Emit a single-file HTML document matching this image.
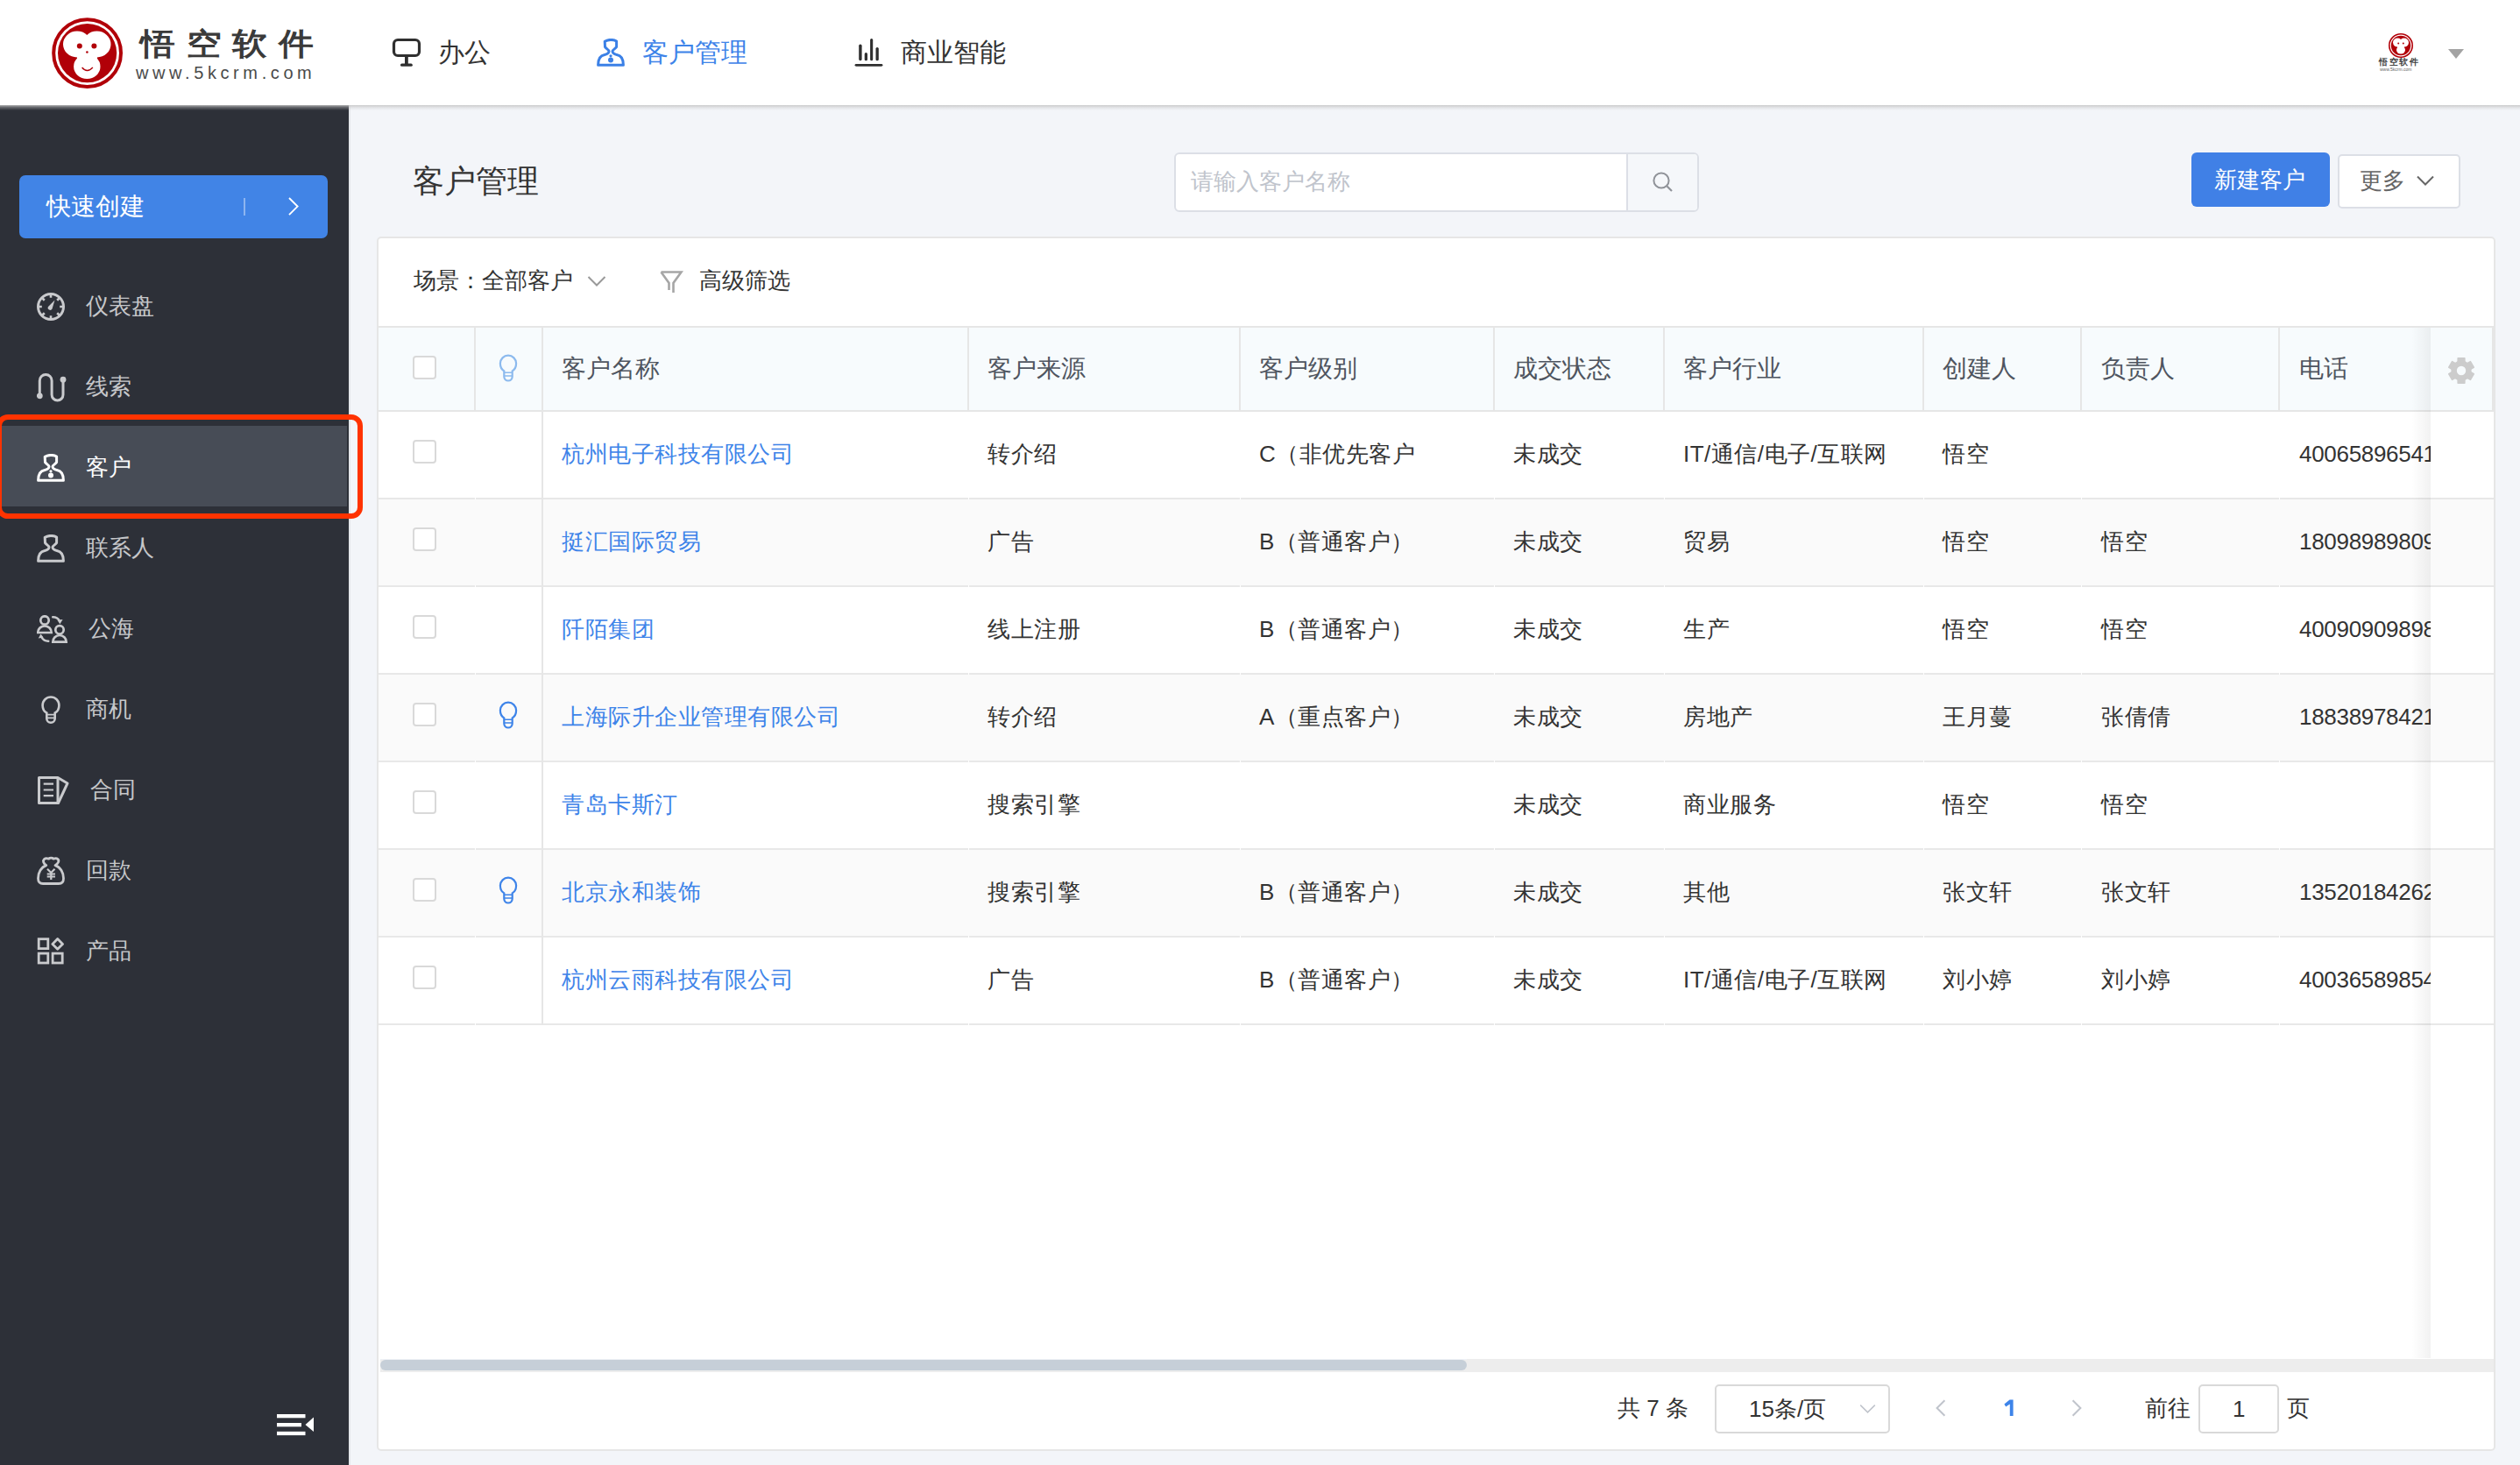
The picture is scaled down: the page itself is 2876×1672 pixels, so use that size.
<!DOCTYPE html>
<html><head><meta charset="utf-8">
<style>
*{margin:0;padding:0;box-sizing:border-box}
html,body{width:2876px;height:1672px;overflow:hidden;background:#F3F5F9;font-family:"Liberation Sans",sans-serif;color:#333;-webkit-font-smoothing:antialiased}
.abs{position:absolute}
.t{position:absolute;white-space:nowrap;line-height:1}
#hdr{position:absolute;left:0;top:0;width:2876px;height:120px;background:#fff;z-index:5}
#hshadow{position:absolute;left:0;top:120px;width:2876px;height:6px;background:linear-gradient(to bottom,rgba(195,195,195,0.85),rgba(195,195,195,0.35) 45%,rgba(195,195,195,0));z-index:6}
#side{position:absolute;left:0;top:120px;width:398px;height:1552px;background:#2D3038;z-index:3}
#mainborder{position:absolute;left:398px;top:120px;width:2px;height:1552px;background:#E4E6EA;z-index:3}
.nav{font-size:30px;color:#333}
.sitem{position:absolute;left:0;width:396px;height:92px}
.sitem .lbl{position:absolute;left:98px;top:1px;line-height:92px;font-size:26px;color:#C6C7CA}
.sitem svg{position:absolute;left:42px;top:30px}
#card{position:absolute;left:430px;top:270px;width:2418px;height:1386px;background:#fff;border:2px solid #E6E6E6;border-radius:5px;overflow:hidden}
.row{position:absolute;left:2px;width:2413px;height:100px;border-bottom:2px solid #EBEEF2}
.hcell{position:absolute;top:0;height:96px;line-height:96px;font-size:28px;color:#4F5560}
.cell{position:absolute;top:0;height:98px;line-height:98px;font-size:26px;color:#333;white-space:nowrap;overflow:hidden}
.vline{position:absolute;width:2px;background:#E8EAEE}
.cb{position:absolute;left:40px;width:27px;height:27px;border:2px solid #D9D9D9;border-radius:4px;background:#fff}
.hd{font-size:28px;color:#4F5560}
.dt{font-size:26px;color:#333;letter-spacing:0.5px}
.dt.link{color:#3E84E9}
.dt.ph{letter-spacing:-0.3px}
</style></head>
<body>
<!-- HEADER -->
<div id="hdr">
  <svg class="abs" style="left:58px;top:19px" width="84" height="84" viewBox="0 0 84 84">
    <circle cx="41.6" cy="41.6" r="38.4" fill="none" stroke="#B10008" stroke-width="4"/>
    <circle cx="41.6" cy="41.6" r="33.6" fill="#B10008"/>
    <ellipse cx="30" cy="31.5" rx="16" ry="15" fill="#fff"/>
    <ellipse cx="52.5" cy="31.5" rx="16" ry="15" fill="#fff"/>
    <ellipse cx="41.3" cy="57" rx="15.2" ry="14" fill="#fff"/>
    <rect x="30" y="38" width="23" height="16" fill="#fff"/>
    <circle cx="32.8" cy="33.5" r="3" fill="#B10008"/>
    <circle cx="49.4" cy="33.5" r="3" fill="#B10008"/>
    <circle cx="41.4" cy="40.5" r="1.3" fill="#B10008"/>
    <path d="M35.6 58 Q41.4 65 47.9 58" fill="none" stroke="#B10008" stroke-width="1.3"/>
  </svg>
  <div class="t" style="left:160px;top:32px;font-size:40px;font-weight:bold;color:#3A3A3A;letter-spacing:12.5px;transform:scaleY(0.88);transform-origin:0 0">悟空软件</div>
  <div class="t" style="left:155px;top:73px;font-size:20px;color:#4A4A4A;letter-spacing:4.6px">www.5kcrm.com</div>

  <!-- nav -->
  <svg class="abs" style="left:446px;top:42px" width="36" height="36" viewBox="0 0 36 36">
    <rect x="3.5" y="3.5" width="29" height="18" rx="4.5" fill="none" stroke="#2F2F2F" stroke-width="3.2"/>
    <rect x="16" y="22" width="3.8" height="9" fill="#2F2F2F"/>
    <rect x="11" y="30.6" width="13.8" height="3.2" rx="1.6" fill="#2F2F2F"/>
  </svg>
  <div class="t nav" style="left:500px;top:45px">办公</div>

  <svg class="abs" style="left:681px;top:44px" width="32" height="32" viewBox="0 0 32 32">
    <path d="M1.6 30.3 C1.6 24 4 19.5 9 18.6 C12 17.8 14 16.8 14 14.6 C14 12.6 10.5 11.6 9.5 9.5 L9.2 3.2 C12 1.6 14 1.4 16 1.4 C18 1.4 20.5 1.8 22.6 3 L22.6 9.5 C21.5 11.6 18 12.6 18 14.6 C18 16.8 20 17.8 23 18.6 C28 19.5 30.4 24 30.4 30.3 Z" fill="none" stroke="#3B80E6" stroke-width="3" stroke-linejoin="round"/>
    <circle cx="16" cy="19.8" r="1.6" fill="#3B80E6"/>
    <circle cx="16" cy="24.6" r="3" fill="#3B80E6"/>
  </svg>
  <div class="t nav" style="left:733px;top:45px;color:#3E84E9">客户管理</div>

  <svg class="abs" style="left:974px;top:42px" width="36" height="36" viewBox="0 0 36 36">
    <rect x="6.2" y="8.6" width="3.4" height="18.7" rx="1.7" fill="#2F2F2F"/>
    <rect x="12.7" y="18.1" width="3.3" height="9.2" rx="1.65" fill="#2F2F2F"/>
    <rect x="19.1" y="2" width="3.1" height="25.3" rx="1.55" fill="#2F2F2F"/>
    <rect x="25.5" y="11.9" width="3.3" height="15.4" rx="1.65" fill="#2F2F2F"/>
    <rect x="1.6" y="30.9" width="31.8" height="2.9" rx="1.45" fill="#2F2F2F"/>
  </svg>
  <div class="t nav" style="left:1028px;top:45px">商业智能</div>

  <!-- avatar -->
  <svg class="abs" style="left:2712px;top:36px" width="56" height="48" viewBox="0 0 56 48">
    <circle cx="28" cy="16" r="13.2" fill="none" stroke="#B10008" stroke-width="1.6"/>
    <circle cx="28" cy="16" r="11.2" fill="#B10008"/>
    <ellipse cx="24.3" cy="12.6" rx="5.3" ry="5" fill="#fff"/>
    <ellipse cx="31.7" cy="12.6" rx="5.3" ry="5" fill="#fff"/>
    <ellipse cx="28" cy="21" rx="5" ry="4.6" fill="#fff"/>
    <rect x="24" y="15" width="8" height="5" fill="#fff"/>
    <circle cx="25.2" cy="13.4" r="1" fill="#B10008"/>
    <circle cx="30.8" cy="13.4" r="1" fill="#B10008"/>
    <rect x="3" y="31" width="50" height="9" fill="none"/>
  </svg>
  <div class="t" style="left:2715px;top:66px;font-size:10px;font-weight:bold;color:#444;letter-spacing:1.6px">悟空软件</div>
  <div class="t" style="left:2716px;top:77px;font-size:5px;color:#666">www.5kcrm.com</div>
  <svg class="abs" style="left:2794px;top:56px" width="18" height="11" viewBox="0 0 18 11"><path d="M0 0 L18 0 L9 11 Z" fill="#A3A3A3"/></svg>
</div>

<!-- SIDEBAR -->
<div id="side">
  <div class="abs" style="left:22px;top:80px;width:352px;height:72px;background:#4184E6;border-radius:7px"></div>
  <div class="t" style="left:53px;top:102px;font-size:28px;color:#fff">快速创建</div>
  <div class="abs" style="left:278px;top:106px;width:2px;height:20px;background:#8DB5F0"></div>
  <svg class="abs" style="left:326px;top:104px" width="18" height="24" viewBox="0 0 18 24"><path d="M4 2 L13.6 11.6 L4 21.2" fill="none" stroke="#fff" stroke-width="1.9"/></svg>

  <div class="sitem" style="top:182px"><svg style="left:42px;top:32px" width="32" height="32" viewBox="0 0 32 32"><circle cx="16" cy="16" r="14.5" fill="none" stroke="#C9CACD" stroke-width="3"/><path d="M16.00 5.80 L16.00 2.60 M23.21 8.79 L25.48 6.52 M26.20 16.00 L29.40 16.00 M23.21 23.21 L25.48 25.48 M16.00 26.20 L16.00 29.40 M8.79 23.21 L6.52 25.48 M5.80 16.00 L2.60 16.00 M8.79 8.79 L6.52 6.52" stroke="#C9CACD" stroke-width="2.6"/><path d="M13.06 15.88 L20.5 8.4 L17.54 18.52 A2.6 2.6 0 0 1 13.06 15.88 Z" fill="#C9CACD"/></svg><div class="lbl">仪表盘</div></div>
  <div class="sitem" style="top:274px"><svg style="left:42px;top:31.5px" width="34" height="34" viewBox="0 0 34 34"><path d="M3.3 25.8 V8.4 A6.9 6.9 0 0 1 17.1 8.4 V24.55 A6.45 6.45 0 0 0 30 24.55 V7.2" fill="none" stroke="#C9CACD" stroke-width="3"/><circle cx="3.3" cy="25.8" r="3.4" fill="#C9CACD"/><circle cx="30" cy="7.2" r="3.4" fill="#C9CACD"/></svg><div class="lbl">线索</div></div>
  <div class="sitem" style="top:366px;background:#474C56;left:2px;width:394px"><svg style="left:40px;top:32px" width="32" height="32" viewBox="0 0 32 32"><path d="M1.6 30.3 C1.6 24 4 19.5 9 18.6 C12 17.8 14 16.8 14 14.6 C14 12.6 10.5 11.6 9.5 9.5 L9.2 3.2 C12 1.6 14 1.4 16 1.4 C18 1.4 20.5 1.8 22.6 3 L22.6 9.5 C21.5 11.6 18 12.6 18 14.6 C18 16.8 20 17.8 23 18.6 C28 19.5 30.4 24 30.4 30.3 Z" fill="none" stroke="#fff" stroke-width="3" stroke-linejoin="round"/><circle cx="16" cy="19.8" r="1.6" fill="#fff"/><circle cx="16" cy="24.6" r="3" fill="#fff"/></svg><div class="lbl" style="color:#fff;left:96px">客户</div></div>
  <div class="sitem" style="top:458px"><svg style="left:42px;top:32px" width="32" height="32" viewBox="0 0 32 32"><path d="M1.6 30.3 C1.6 24 4 19.5 9 18.6 C12 17.8 14 16.8 14 14.6 C14 12.6 10.5 11.6 9.5 9.5 L9.2 3.2 C12 1.6 14 1.4 16 1.4 C18 1.4 20.5 1.8 22.6 3 L22.6 9.5 C21.5 11.6 18 12.6 18 14.6 C18 16.8 20 17.8 23 18.6 C28 19.5 30.4 24 30.4 30.3 Z" fill="none" stroke="#C9CACD" stroke-width="3" stroke-linejoin="round"/></svg><div class="lbl">联系人</div></div>
  <div class="sitem" style="top:550px"><svg style="left:42px;top:32px" width="36" height="33" viewBox="0 0 36 33"><g fill="none" stroke="#C9CACD" stroke-width="2.7"><circle cx="9" cy="6" r="4.7"/><path d="M1.3 20 A7.7 7.7 0 0 1 16.7 20 Z"/><circle cx="26" cy="16.8" r="4.7"/><path d="M18.3 30.7 A7.7 7.7 0 0 1 33.7 30.7 Z"/></g>
<g fill="none" stroke="#C9CACD" stroke-width="2.4" stroke-linecap="round"><path d="M18.2 2.3 Q23.5 2.2 26 6.5"/><path d="M13.3 29.8 Q8.2 30 5.3 25.2"/></g>
<path d="M23.2 5.6 L29.6 5 L26.4 10.2 Z M1.8 26.6 L7.6 25.6 L4.5 21.6 Z" fill="#C9CACD"/></svg><div class="lbl" style="left:101px">公海</div></div>
  <div class="sitem" style="top:642px"><svg style="left:46px;top:31.6px" width="24" height="34" viewBox="0 0 24 34"><path d="M7.3 19.6 C4.5 18 2.6 14.6 2.6 10.9 C2.6 5.7 6.8 1.5 12 1.5 C17.2 1.5 21.4 5.7 21.4 10.9 C21.4 14.6 19.5 18 16.7 19.6 L16.7 26 C16.7 28.7 14.6 30.8 12 30.8 C9.4 30.8 7.3 28.7 7.3 26 Z" fill="none" stroke="#C9CACD" stroke-width="2.6"/><path d="M7.3 21.6 H16.7 M7.3 25.3 H16.7" stroke="#C9CACD" stroke-width="1.8"/></svg><div class="lbl">商机</div></div>
  <div class="sitem" style="top:734px"><svg style="left:41px;top:31px" width="38" height="34" viewBox="0 0 38 34"><path d="M3.5 2.5 H25 L36 9 L25.5 31.5 H3.5 Z" fill="none" stroke="#C9CACD" stroke-width="3" stroke-linejoin="round"/><path d="M25 2.5 V31.5" stroke="#C9CACD" stroke-width="3"/><path d="M8.7 9.6 H20 M8.7 16.5 H20 M8.7 23.2 H20" stroke="#C9CACD" stroke-width="2.2"/></svg><div class="lbl" style="left:103px">合同</div></div>
  <div class="sitem" style="top:826px"><svg style="left:41px;top:31px" width="34" height="34" viewBox="0 0 34 34"><path d="M11.8 10.6 C8.5 8.5 7.5 5.5 9.5 3.6 C11 2.3 13 2.6 14.6 3.2 C16 1.8 18.6 1.8 20 3.2 C21.6 2.6 23.6 2.3 25 3.6 C27 5.5 25.5 8.5 22 10.6 C28 12.5 31.5 19 31.5 25.5 C31.5 29.5 29.5 31.5 26 31.5 H8 C4.5 31.5 2.5 29.5 2.5 25.5 C2.5 19 6 12.5 11.8 10.6 Z" fill="none" stroke="#C9CACD" stroke-width="2.8" stroke-linejoin="round"/><path d="M13 14.8 L17.3 19 L21.5 14.8 M17.3 19 V27 M12.7 20.5 H22 M12.7 23.5 H22" fill="none" stroke="#C9CACD" stroke-width="2.2"/></svg><div class="lbl">回款</div></div>
  <div class="sitem" style="top:918px"><svg style="left:41px;top:32px" width="34" height="34" viewBox="0 0 34 34"><g fill="none" stroke="#C9CACD" stroke-width="2.8"><rect x="3.2" y="1.7" width="10.6" height="10.9"/><rect x="3.2" y="18.1" width="10.6" height="10.9"/><rect x="19.1" y="18.1" width="11.1" height="10.9"/><path d="M24.7 1.6 L30.5 7.4 L24.7 13.2 L18.9 7.4 Z" stroke-linejoin="round"/></g></svg><div class="lbl">产品</div></div>
  <svg class="abs" style="left:314px;top:1492px" width="48" height="28" viewBox="0 0 48 28">
    <rect x="2" y="2" width="32.5" height="4.3" fill="#fff"/>
    <rect x="2" y="12" width="28" height="4.3" fill="#fff"/>
    <rect x="2" y="21.8" width="32.5" height="4.3" fill="#fff"/>
    <path d="M44 5.5 L44 22 L34.5 14 Z" fill="#fff"/>
  </svg>
</div>
<div id="mainborder"></div>
<div id="hshadow"></div>

<!-- red highlight -->
<div class="abs" style="left:-4px;top:473px;width:418px;height:119px;border:6px solid #FF3300;border-radius:13px;z-index:6"></div>

<!-- MAIN -->
<div class="t" style="left:471px;top:189px;font-size:36px;color:#333">客户管理</div>

<div class="abs" style="left:1340px;top:174px;width:599px;height:68px;border:2px solid #DCDFE6;border-radius:6px;background:#fff;overflow:hidden">
  <div class="t" style="left:17px;top:18px;font-size:26px;color:#C0C4CC">请输入客户名称</div>
  <div class="abs" style="left:514px;top:0;width:83px;height:64px;background:#F5F7FA;border-left:2px solid #DCDFE6"></div>
  <svg class="abs" style="left:543px;top:19px" width="26" height="26" viewBox="0 0 26 26"><circle cx="11" cy="11" r="8.6" fill="none" stroke="#909399" stroke-width="2"/><path d="M17.5 17.5 L23 23" stroke="#909399" stroke-width="2.2"/></svg>
</div>

<div class="abs" style="left:2501px;top:174px;width:158px;height:62px;background:#4080E6;border-radius:6px"></div>
<div class="t" style="left:2527px;top:192px;font-size:26px;color:#fff">新建客户</div>
<div class="abs" style="left:2668px;top:176px;width:140px;height:62px;background:#fff;border:2px solid #DCDFE6;border-radius:5px"></div>
<div class="t" style="left:2693px;top:193px;font-size:26px;color:#666">更多</div>
<svg class="abs" style="left:2758px;top:200px" width="20" height="13" viewBox="0 0 20 13"><path d="M1 1.5 L10 10.5 L19 1.5" fill="none" stroke="#666" stroke-width="2"/></svg>

<div id="card"></div>
<!-- filter bar -->
<div class="t" style="left:472px;top:307px;font-size:26px;color:#333">场景：全部客户</div>
<svg class="abs" style="left:670px;top:314px" width="22" height="14" viewBox="0 0 22 14"><path d="M1.5 2 L11 11.5 L20.5 2" fill="none" stroke="#999" stroke-width="2"/></svg>
<svg class="abs" style="left:752px;top:307px" width="28" height="30" viewBox="0 0 28 30"><path d="M2.5 3.5 H25.5 L16.5 16 V27" fill="none" stroke="#A6A6A6" stroke-width="2.6"/><path d="M2.5 3.5 L11.5 16 V24" fill="none" stroke="#A6A6A6" stroke-width="2.6"/></svg>
<div class="t" style="left:798px;top:307px;font-size:26px;color:#333">高级筛选</div>
<div class="abs" style="left:432px;top:372px;width:2414px;height:2px;background:#E6E6E6"></div>
<div class="abs" style="left:432px;top:374px;width:2414px;height:94px;background:#F7FBFD"></div>
<div class="abs" style="left:432px;top:468px;width:2414px;height:2px;background:#E6E6E6"></div>
<div class="abs" style="left:541px;top:374px;width:2px;height:94px;background:#E6E6E6"></div>
<div class="abs" style="left:618px;top:374px;width:2px;height:94px;background:#E6E6E6"></div>
<div class="abs" style="left:1104px;top:374px;width:2px;height:94px;background:#E6E6E6"></div>
<div class="abs" style="left:1414px;top:374px;width:2px;height:94px;background:#E6E6E6"></div>
<div class="abs" style="left:1704px;top:374px;width:2px;height:94px;background:#E6E6E6"></div>
<div class="abs" style="left:1898px;top:374px;width:2px;height:94px;background:#E6E6E6"></div>
<div class="abs" style="left:2194px;top:374px;width:2px;height:94px;background:#E6E6E6"></div>
<div class="abs" style="left:2374px;top:374px;width:2px;height:94px;background:#E6E6E6"></div>
<div class="abs" style="left:2600px;top:374px;width:2px;height:94px;background:#E6E6E6"></div>
<div class="cb" style="left:471px;top:406px"></div>
<svg class="abs" style="left:568px;top:404px" width="24" height="34" viewBox="0 0 24 34"><path d="M7.3 19.4 C4.5 17.8 2.9 14.5 2.9 10.8 C2.9 5.8 7 1.7 12 1.7 C17 1.7 21.1 5.8 21.1 10.8 C21.1 14.5 19.5 17.8 16.7 19.4 L16.7 25.8 C16.7 28.4 14.6 30.5 12 30.5 C9.4 30.5 7.3 28.4 7.3 25.8 Z" fill="none" stroke="#8CBAEE" stroke-width="2.2"/><path d="M7.3 21.3 H16.7 M7.3 25 H16.7" stroke="#8CBAEE" stroke-width="1.5"/></svg>
<div class="t hd" style="left:641px;top:407px">客户名称</div>
<div class="t hd" style="left:1127px;top:407px">客户来源</div>
<div class="t hd" style="left:1437px;top:407px">客户级别</div>
<div class="t hd" style="left:1727px;top:407px">成交状态</div>
<div class="t hd" style="left:1921px;top:407px">客户行业</div>
<div class="t hd" style="left:2217px;top:407px">创建人</div>
<div class="t hd" style="left:2398px;top:407px">负责人</div>
<div class="t hd" style="left:2624px;top:407px">电话</div>
<div class="abs" style="left:432px;top:470px;width:2414px;height:98px;background:#FFFFFF"></div>
<div class="abs" style="left:432px;top:568px;width:2414px;height:2px;background:#E8E8E8"></div>
<div class="abs" style="left:542px;top:568px;width:1px;height:2px;background:#FFFFFF"></div>
<div class="abs" style="left:1105px;top:568px;width:1px;height:2px;background:#FFFFFF"></div>
<div class="abs" style="left:1415px;top:568px;width:1px;height:2px;background:#FFFFFF"></div>
<div class="abs" style="left:1705px;top:568px;width:1px;height:2px;background:#FFFFFF"></div>
<div class="abs" style="left:1899px;top:568px;width:1px;height:2px;background:#FFFFFF"></div>
<div class="abs" style="left:2195px;top:568px;width:1px;height:2px;background:#FFFFFF"></div>
<div class="abs" style="left:2375px;top:568px;width:1px;height:2px;background:#FFFFFF"></div>
<div class="abs" style="left:2601px;top:568px;width:1px;height:2px;background:#FFFFFF"></div>
<div class="cb" style="left:471px;top:502px"></div>
<div class="t dt link" style="left:641px;top:505px">杭州电子科技有限公司</div>
<div class="t dt" style="left:1127px;top:505px">转介绍</div>
<div class="t dt" style="left:1437px;top:505px">C（非优先客户</div>
<div class="t dt" style="left:1727px;top:505px">未成交</div>
<div class="t dt" style="left:1921px;top:505px">IT/通信/电子/互联网</div>
<div class="t dt" style="left:2217px;top:505px">悟空</div>
<div class="t dt" style="left:2398px;top:505px"></div>
<div class="t dt ph" style="left:2624px;top:505px">40065896541</div>
<div class="abs" style="left:432px;top:570px;width:2414px;height:98px;background:#FAFAFA"></div>
<div class="abs" style="left:432px;top:668px;width:2414px;height:2px;background:#E8E8E8"></div>
<div class="abs" style="left:542px;top:668px;width:1px;height:2px;background:#FFFFFF"></div>
<div class="abs" style="left:1105px;top:668px;width:1px;height:2px;background:#FFFFFF"></div>
<div class="abs" style="left:1415px;top:668px;width:1px;height:2px;background:#FFFFFF"></div>
<div class="abs" style="left:1705px;top:668px;width:1px;height:2px;background:#FFFFFF"></div>
<div class="abs" style="left:1899px;top:668px;width:1px;height:2px;background:#FFFFFF"></div>
<div class="abs" style="left:2195px;top:668px;width:1px;height:2px;background:#FFFFFF"></div>
<div class="abs" style="left:2375px;top:668px;width:1px;height:2px;background:#FFFFFF"></div>
<div class="abs" style="left:2601px;top:668px;width:1px;height:2px;background:#FFFFFF"></div>
<div class="cb" style="left:471px;top:602px"></div>
<div class="t dt link" style="left:641px;top:605px">挺汇国际贸易</div>
<div class="t dt" style="left:1127px;top:605px">广告</div>
<div class="t dt" style="left:1437px;top:605px">B（普通客户）</div>
<div class="t dt" style="left:1727px;top:605px">未成交</div>
<div class="t dt" style="left:1921px;top:605px">贸易</div>
<div class="t dt" style="left:2217px;top:605px">悟空</div>
<div class="t dt" style="left:2398px;top:605px">悟空</div>
<div class="t dt ph" style="left:2624px;top:605px">18098989809</div>
<div class="abs" style="left:432px;top:670px;width:2414px;height:98px;background:#FFFFFF"></div>
<div class="abs" style="left:432px;top:768px;width:2414px;height:2px;background:#E8E8E8"></div>
<div class="abs" style="left:542px;top:768px;width:1px;height:2px;background:#FFFFFF"></div>
<div class="abs" style="left:1105px;top:768px;width:1px;height:2px;background:#FFFFFF"></div>
<div class="abs" style="left:1415px;top:768px;width:1px;height:2px;background:#FFFFFF"></div>
<div class="abs" style="left:1705px;top:768px;width:1px;height:2px;background:#FFFFFF"></div>
<div class="abs" style="left:1899px;top:768px;width:1px;height:2px;background:#FFFFFF"></div>
<div class="abs" style="left:2195px;top:768px;width:1px;height:2px;background:#FFFFFF"></div>
<div class="abs" style="left:2375px;top:768px;width:1px;height:2px;background:#FFFFFF"></div>
<div class="abs" style="left:2601px;top:768px;width:1px;height:2px;background:#FFFFFF"></div>
<div class="cb" style="left:471px;top:702px"></div>
<div class="t dt link" style="left:641px;top:705px">阡陌集团</div>
<div class="t dt" style="left:1127px;top:705px">线上注册</div>
<div class="t dt" style="left:1437px;top:705px">B（普通客户）</div>
<div class="t dt" style="left:1727px;top:705px">未成交</div>
<div class="t dt" style="left:1921px;top:705px">生产</div>
<div class="t dt" style="left:2217px;top:705px">悟空</div>
<div class="t dt" style="left:2398px;top:705px">悟空</div>
<div class="t dt ph" style="left:2624px;top:705px">40090909898</div>
<div class="abs" style="left:432px;top:770px;width:2414px;height:98px;background:#FAFAFA"></div>
<div class="abs" style="left:432px;top:868px;width:2414px;height:2px;background:#E8E8E8"></div>
<div class="abs" style="left:542px;top:868px;width:1px;height:2px;background:#FFFFFF"></div>
<div class="abs" style="left:1105px;top:868px;width:1px;height:2px;background:#FFFFFF"></div>
<div class="abs" style="left:1415px;top:868px;width:1px;height:2px;background:#FFFFFF"></div>
<div class="abs" style="left:1705px;top:868px;width:1px;height:2px;background:#FFFFFF"></div>
<div class="abs" style="left:1899px;top:868px;width:1px;height:2px;background:#FFFFFF"></div>
<div class="abs" style="left:2195px;top:868px;width:1px;height:2px;background:#FFFFFF"></div>
<div class="abs" style="left:2375px;top:868px;width:1px;height:2px;background:#FFFFFF"></div>
<div class="abs" style="left:2601px;top:868px;width:1px;height:2px;background:#FFFFFF"></div>
<div class="cb" style="left:471px;top:802px"></div>
<svg class="abs" style="left:568px;top:800px" width="24" height="34" viewBox="0 0 24 34"><path d="M7.3 19.4 C4.5 17.8 2.9 14.5 2.9 10.8 C2.9 5.8 7 1.7 12 1.7 C17 1.7 21.1 5.8 21.1 10.8 C21.1 14.5 19.5 17.8 16.7 19.4 L16.7 25.8 C16.7 28.4 14.6 30.5 12 30.5 C9.4 30.5 7.3 28.4 7.3 25.8 Z" fill="none" stroke="#3E84E9" stroke-width="2.2"/><path d="M7.3 21.3 H16.7 M7.3 25 H16.7" stroke="#3E84E9" stroke-width="1.5"/></svg>
<div class="t dt link" style="left:641px;top:805px">上海际升企业管理有限公司</div>
<div class="t dt" style="left:1127px;top:805px">转介绍</div>
<div class="t dt" style="left:1437px;top:805px">A（重点客户）</div>
<div class="t dt" style="left:1727px;top:805px">未成交</div>
<div class="t dt" style="left:1921px;top:805px">房地产</div>
<div class="t dt" style="left:2217px;top:805px">王月蔓</div>
<div class="t dt" style="left:2398px;top:805px">张倩倩</div>
<div class="t dt ph" style="left:2624px;top:805px">18838978421</div>
<div class="abs" style="left:432px;top:870px;width:2414px;height:98px;background:#FFFFFF"></div>
<div class="abs" style="left:432px;top:968px;width:2414px;height:2px;background:#E8E8E8"></div>
<div class="abs" style="left:542px;top:968px;width:1px;height:2px;background:#FFFFFF"></div>
<div class="abs" style="left:1105px;top:968px;width:1px;height:2px;background:#FFFFFF"></div>
<div class="abs" style="left:1415px;top:968px;width:1px;height:2px;background:#FFFFFF"></div>
<div class="abs" style="left:1705px;top:968px;width:1px;height:2px;background:#FFFFFF"></div>
<div class="abs" style="left:1899px;top:968px;width:1px;height:2px;background:#FFFFFF"></div>
<div class="abs" style="left:2195px;top:968px;width:1px;height:2px;background:#FFFFFF"></div>
<div class="abs" style="left:2375px;top:968px;width:1px;height:2px;background:#FFFFFF"></div>
<div class="abs" style="left:2601px;top:968px;width:1px;height:2px;background:#FFFFFF"></div>
<div class="cb" style="left:471px;top:902px"></div>
<div class="t dt link" style="left:641px;top:905px">青岛卡斯汀</div>
<div class="t dt" style="left:1127px;top:905px">搜索引擎</div>
<div class="t dt" style="left:1437px;top:905px"></div>
<div class="t dt" style="left:1727px;top:905px">未成交</div>
<div class="t dt" style="left:1921px;top:905px">商业服务</div>
<div class="t dt" style="left:2217px;top:905px">悟空</div>
<div class="t dt" style="left:2398px;top:905px">悟空</div>
<div class="t dt ph" style="left:2624px;top:905px"></div>
<div class="abs" style="left:432px;top:970px;width:2414px;height:98px;background:#FAFAFA"></div>
<div class="abs" style="left:432px;top:1068px;width:2414px;height:2px;background:#E8E8E8"></div>
<div class="abs" style="left:542px;top:1068px;width:1px;height:2px;background:#FFFFFF"></div>
<div class="abs" style="left:1105px;top:1068px;width:1px;height:2px;background:#FFFFFF"></div>
<div class="abs" style="left:1415px;top:1068px;width:1px;height:2px;background:#FFFFFF"></div>
<div class="abs" style="left:1705px;top:1068px;width:1px;height:2px;background:#FFFFFF"></div>
<div class="abs" style="left:1899px;top:1068px;width:1px;height:2px;background:#FFFFFF"></div>
<div class="abs" style="left:2195px;top:1068px;width:1px;height:2px;background:#FFFFFF"></div>
<div class="abs" style="left:2375px;top:1068px;width:1px;height:2px;background:#FFFFFF"></div>
<div class="abs" style="left:2601px;top:1068px;width:1px;height:2px;background:#FFFFFF"></div>
<div class="cb" style="left:471px;top:1002px"></div>
<svg class="abs" style="left:568px;top:1000px" width="24" height="34" viewBox="0 0 24 34"><path d="M7.3 19.4 C4.5 17.8 2.9 14.5 2.9 10.8 C2.9 5.8 7 1.7 12 1.7 C17 1.7 21.1 5.8 21.1 10.8 C21.1 14.5 19.5 17.8 16.7 19.4 L16.7 25.8 C16.7 28.4 14.6 30.5 12 30.5 C9.4 30.5 7.3 28.4 7.3 25.8 Z" fill="none" stroke="#3E84E9" stroke-width="2.2"/><path d="M7.3 21.3 H16.7 M7.3 25 H16.7" stroke="#3E84E9" stroke-width="1.5"/></svg>
<div class="t dt link" style="left:641px;top:1005px">北京永和装饰</div>
<div class="t dt" style="left:1127px;top:1005px">搜索引擎</div>
<div class="t dt" style="left:1437px;top:1005px">B（普通客户）</div>
<div class="t dt" style="left:1727px;top:1005px">未成交</div>
<div class="t dt" style="left:1921px;top:1005px">其他</div>
<div class="t dt" style="left:2217px;top:1005px">张文轩</div>
<div class="t dt" style="left:2398px;top:1005px">张文轩</div>
<div class="t dt ph" style="left:2624px;top:1005px">13520184262</div>
<div class="abs" style="left:432px;top:1070px;width:2414px;height:98px;background:#FFFFFF"></div>
<div class="abs" style="left:432px;top:1168px;width:2414px;height:2px;background:#E8E8E8"></div>
<div class="abs" style="left:542px;top:1168px;width:1px;height:2px;background:#FFFFFF"></div>
<div class="abs" style="left:1105px;top:1168px;width:1px;height:2px;background:#FFFFFF"></div>
<div class="abs" style="left:1415px;top:1168px;width:1px;height:2px;background:#FFFFFF"></div>
<div class="abs" style="left:1705px;top:1168px;width:1px;height:2px;background:#FFFFFF"></div>
<div class="abs" style="left:1899px;top:1168px;width:1px;height:2px;background:#FFFFFF"></div>
<div class="abs" style="left:2195px;top:1168px;width:1px;height:2px;background:#FFFFFF"></div>
<div class="abs" style="left:2375px;top:1168px;width:1px;height:2px;background:#FFFFFF"></div>
<div class="abs" style="left:2601px;top:1168px;width:1px;height:2px;background:#FFFFFF"></div>
<div class="cb" style="left:471px;top:1102px"></div>
<div class="t dt link" style="left:641px;top:1105px">杭州云雨科技有限公司</div>
<div class="t dt" style="left:1127px;top:1105px">广告</div>
<div class="t dt" style="left:1437px;top:1105px">B（普通客户）</div>
<div class="t dt" style="left:1727px;top:1105px">未成交</div>
<div class="t dt" style="left:1921px;top:1105px">IT/通信/电子/互联网</div>
<div class="t dt" style="left:2217px;top:1105px">刘小婷</div>
<div class="t dt" style="left:2398px;top:1105px">刘小婷</div>
<div class="t dt ph" style="left:2624px;top:1105px">40036589854</div>
<div class="abs" style="left:618px;top:470px;width:2px;height:700px;background:#E6E6E6"></div>
<div class="abs" style="left:2752px;top:374px;width:22px;height:1176px;background:linear-gradient(to right,rgba(0,0,0,0),rgba(0,0,0,0.05))"></div>
<div class="abs" style="left:2774px;top:374px;width:72px;height:94px;background:#F7FBFD"></div>
<div class="abs" style="left:2774px;top:468px;width:72px;height:2px;background:#E6E6E6"></div>
<div class="abs" style="left:2774px;top:470px;width:72px;height:98px;background:#FFFFFF"></div>
<div class="abs" style="left:2774px;top:568px;width:72px;height:2px;background:#E8E8E8"></div>
<div class="abs" style="left:2774px;top:570px;width:72px;height:98px;background:#FAFAFA"></div>
<div class="abs" style="left:2774px;top:668px;width:72px;height:2px;background:#E8E8E8"></div>
<div class="abs" style="left:2774px;top:670px;width:72px;height:98px;background:#FFFFFF"></div>
<div class="abs" style="left:2774px;top:768px;width:72px;height:2px;background:#E8E8E8"></div>
<div class="abs" style="left:2774px;top:770px;width:72px;height:98px;background:#FAFAFA"></div>
<div class="abs" style="left:2774px;top:868px;width:72px;height:2px;background:#E8E8E8"></div>
<div class="abs" style="left:2774px;top:870px;width:72px;height:98px;background:#FFFFFF"></div>
<div class="abs" style="left:2774px;top:968px;width:72px;height:2px;background:#E8E8E8"></div>
<div class="abs" style="left:2774px;top:970px;width:72px;height:98px;background:#FAFAFA"></div>
<div class="abs" style="left:2774px;top:1068px;width:72px;height:2px;background:#E8E8E8"></div>
<div class="abs" style="left:2774px;top:1070px;width:72px;height:98px;background:#FFFFFF"></div>
<div class="abs" style="left:2774px;top:1168px;width:72px;height:2px;background:#E8E8E8"></div>
<div class="abs" style="left:2774px;top:1170px;width:72px;height:380px;background:#fff"></div>
<svg class="abs" style="left:2794px;top:408px" width="30" height="30" viewBox="0 0 30 30"><g fill="#CCCCCC"><circle cx="15" cy="15" r="11.6"/><rect x="10.4" y="0" width="9.2" height="30" rx="0.8"/><rect x="10.4" y="0" width="9.2" height="30" rx="0.8" transform="rotate(60 15 15)"/><rect x="10.4" y="0" width="9.2" height="30" rx="0.8" transform="rotate(120 15 15)"/></g><circle cx="15" cy="15" r="5.2" fill="#F7FBFD"/></svg>
<div class="abs" style="left:2844px;top:374px;width:2px;height:94px;background:#E6E6E6"></div>
<div class="abs" style="left:434px;top:1551px;width:2412px;height:15px;background:#EDEDED"></div>
<div class="abs" style="left:434px;top:1551px;width:1240px;height:1px;background:#EEF1F6"></div>
<div class="abs" style="left:434px;top:1552px;width:1240px;height:12px;background:#C6CFD8;border-radius:6px"></div>
<!-- pagination -->
<div class="t" style="left:1846px;top:1594px;font-size:26px;color:#333">共 7 条</div>
<div class="abs" style="left:1957px;top:1580px;width:200px;height:56px;border:2px solid #D9D9D9;border-radius:5px;background:#fff"></div>
<div class="t" style="left:1996px;top:1595px;font-size:26px;color:#333">15条/页</div>
<svg class="abs" style="left:2122px;top:1602px" width="19" height="12" viewBox="0 0 19 12"><path d="M1.2 1.6 L9.5 9.9 L17.8 1.6" fill="none" stroke="#C0C4CC" stroke-width="1.5"/></svg>
<svg class="abs" style="left:2208px;top:1597px" width="14" height="20" viewBox="0 0 14 20"><path d="M11.4 1.2 L2.6 10 L11.4 18.8" fill="none" stroke="#C0C4CC" stroke-width="2"/></svg>
<svg class="abs" style="left:2287px;top:1597px" width="12" height="20" viewBox="0 0 12 20"><path d="M6.6 0.6 H10.6 V19 H6.8 V5.4 L2.2 8.6 L0.4 5.6 Z" fill="#3E84E9"/></svg>
<svg class="abs" style="left:2363px;top:1597px" width="14" height="20" viewBox="0 0 14 20"><path d="M2.6 1.2 L11.4 10 L2.6 18.8" fill="none" stroke="#C0C4CC" stroke-width="2"/></svg>
<div class="t" style="left:2448px;top:1594px;font-size:26px;color:#333">前往</div>
<div class="abs" style="left:2509px;top:1580px;width:92px;height:56px;border:2px solid #D9D9D9;border-radius:5px;background:#fff"></div>
<div class="t" style="left:2548px;top:1595px;font-size:26px;color:#333">1</div>
<div class="t" style="left:2610px;top:1594px;font-size:26px;color:#333">页</div>


</body></html>
